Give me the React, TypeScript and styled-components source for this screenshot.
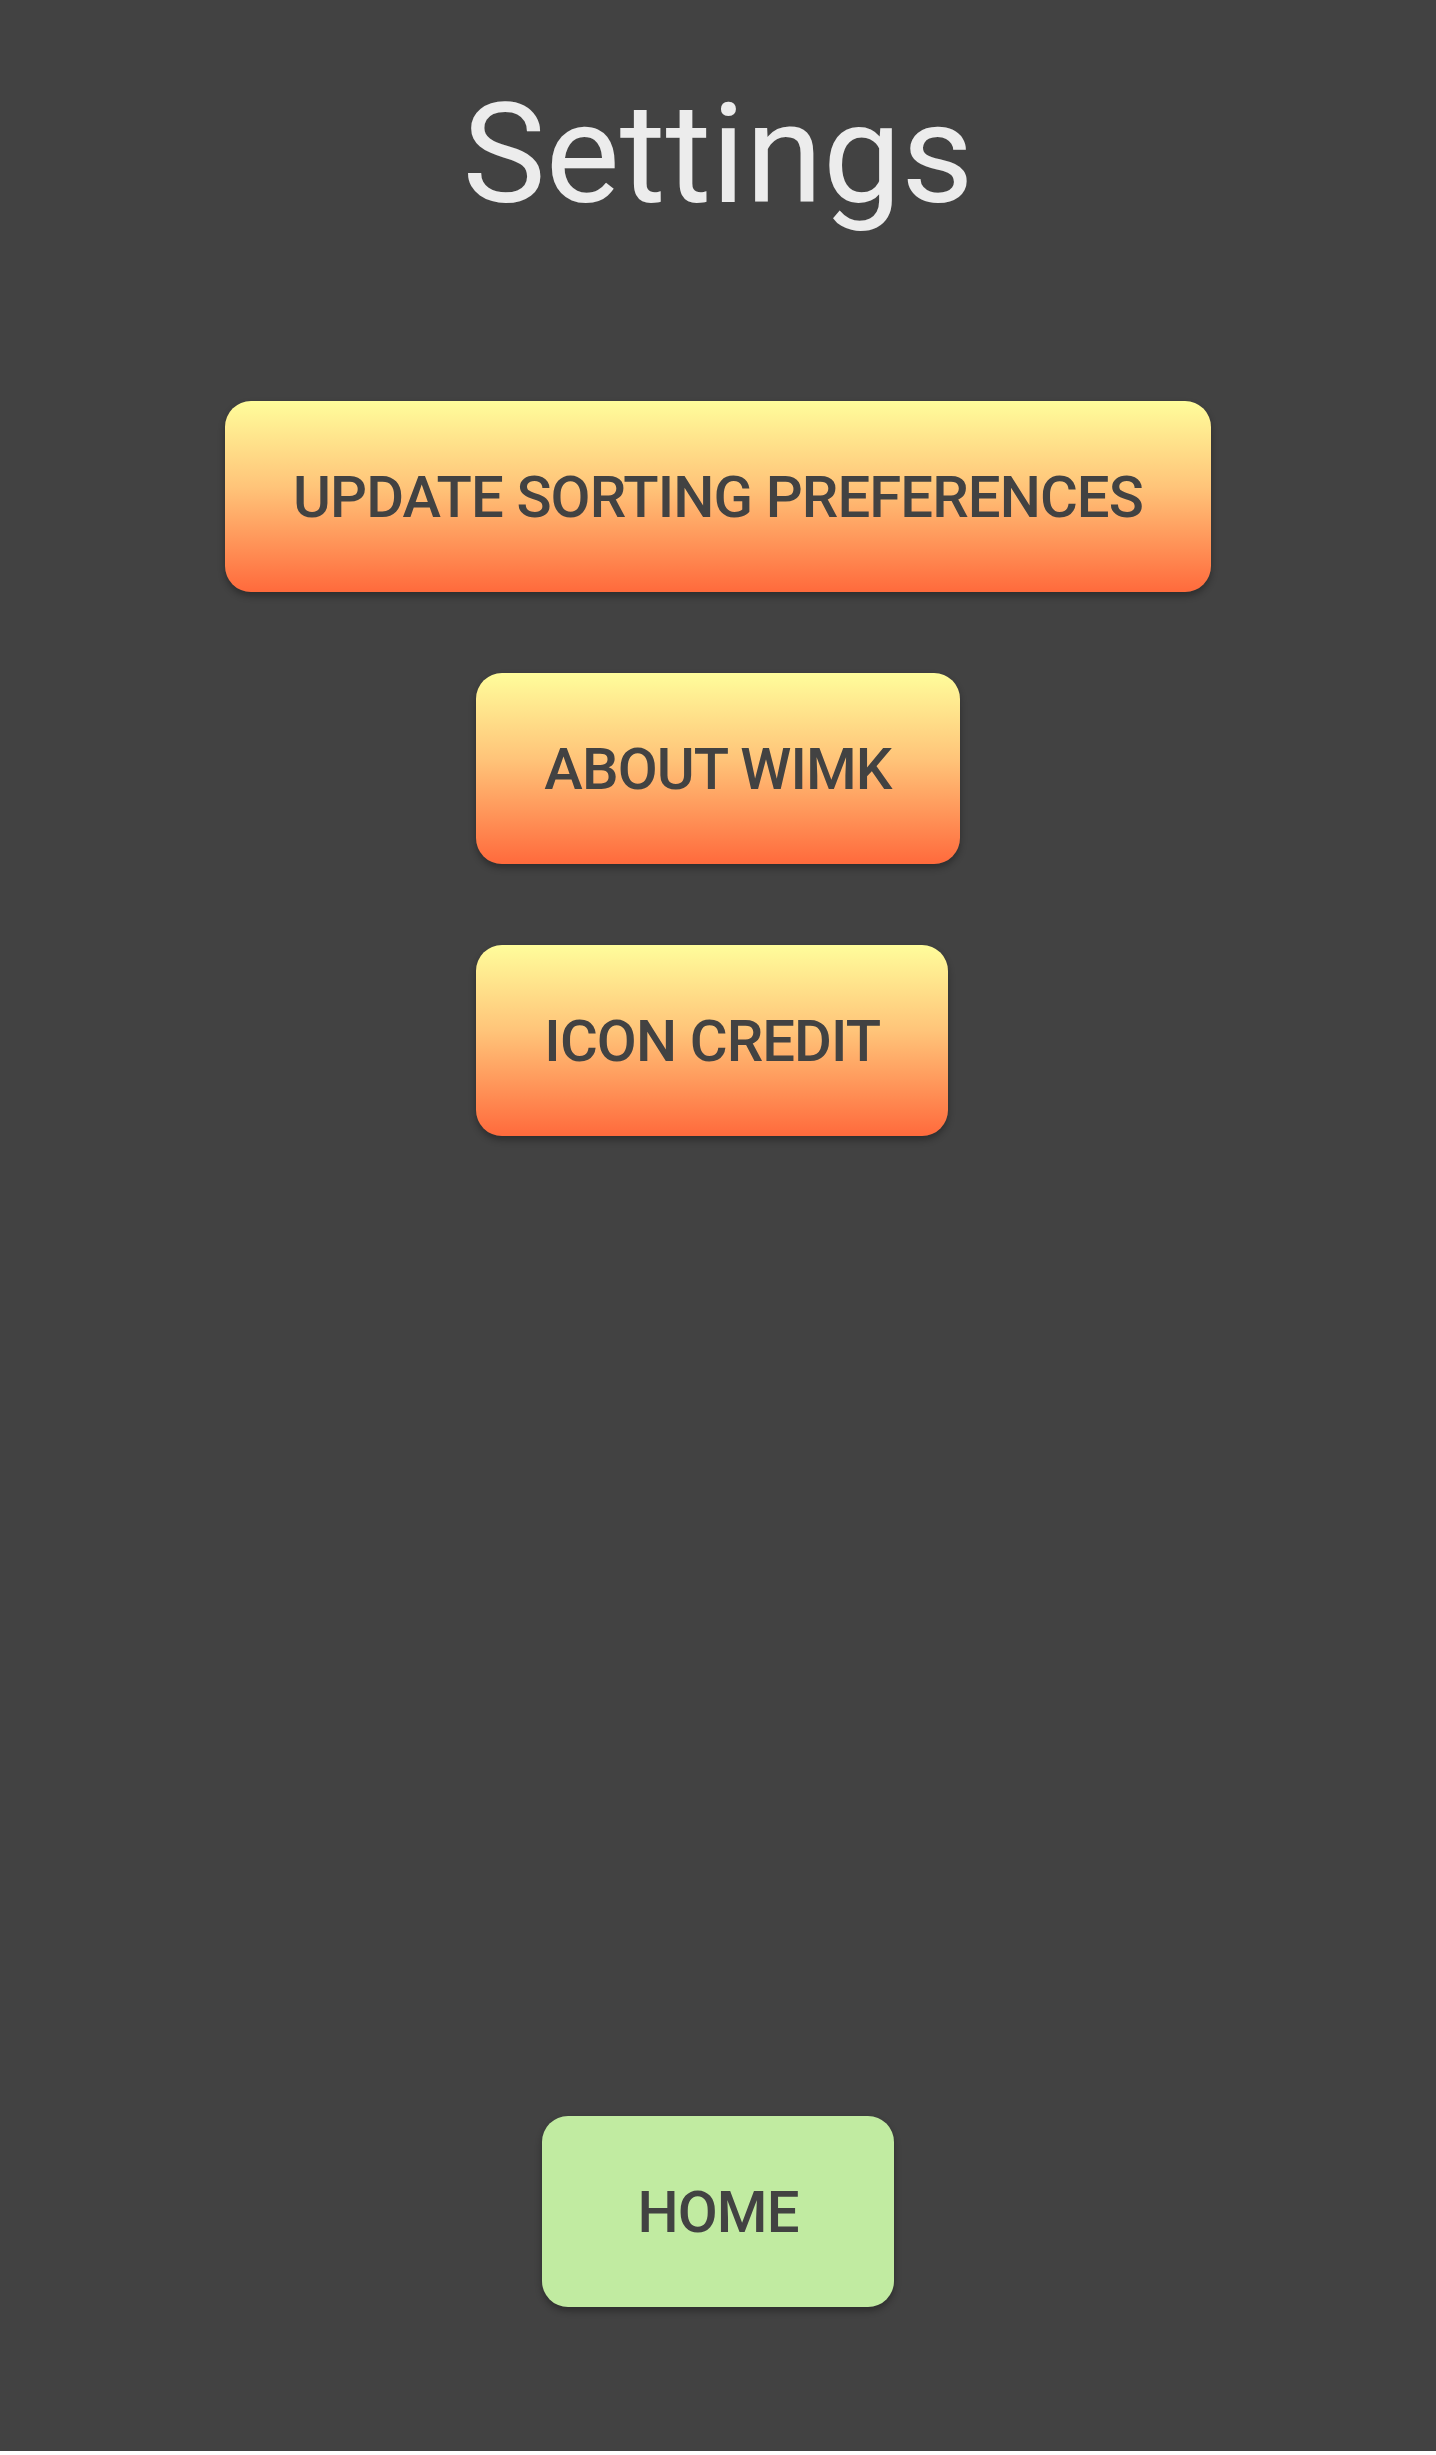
import React from "react";
import styled, { createGlobalStyle } from "styled-components";

const Global = createGlobalStyle`
  html, body {
    margin: 0;
    padding: 0;
    background: #ffffff;
  }
  * { box-sizing: border-box; }
`;

const Screen = styled.div`
  min-height: 2451px;
  background: #424242;
  display: flex;
  flex-direction: column;
  align-items: center;
  padding: 84px 0 144px;
  font-family: Roboto, "Noto Sans", sans-serif;
`;

const Title = styled.h1`
  margin: 0 0 177px;
  font-size: 140px;
  line-height: 140px;
  font-weight: 400;
  color: #ececec;
`;

const Menu = styled.div`
  display: flex;
  flex-direction: column;
  align-items: center;
  gap: 81px;
`;

const SubMenu = styled.div`
  display: flex;
  flex-direction: column;
  align-items: flex-start;
  gap: 81px;
`;

const Spacer = styled.div`
  flex: 1;
`;

const ActionButton = styled.button<{ $variant?: "warm" | "green" }>`
  height: 191px;
  min-width: ${(p) => (p.$variant === "green" ? "352px" : "0")};
  padding: 0 68px;
  border: none;
  border-radius: 26px;
  background: ${(p) =>
    p.$variant === "green"
      ? "#c1eba1"
      : "linear-gradient(180deg, #fffd9b 0%, #ffc479 45%, #ff6a3c 100%)"};
  box-shadow: 0 4px 7px rgba(0, 0, 0, 0.32);
  font-family: Roboto, "Noto Sans", sans-serif;
  font-size: 58px;
  font-weight: 500;
  color: #424242;
  text-transform: uppercase;
  letter-spacing: -0.9px;
  cursor: pointer;
`;

export default function App() {
  return (
    <>
      <Global />
      <Screen>
        <Title>Settings</Title>
        <Menu>
          <ActionButton>Update Sorting Preferences</ActionButton>
          <SubMenu>
            <ActionButton>About WIMK</ActionButton>
            <ActionButton>Icon Credit</ActionButton>
          </SubMenu>
        </Menu>
        <Spacer />
        <ActionButton $variant="green">Home</ActionButton>
      </Screen>
    </>
  );
}
